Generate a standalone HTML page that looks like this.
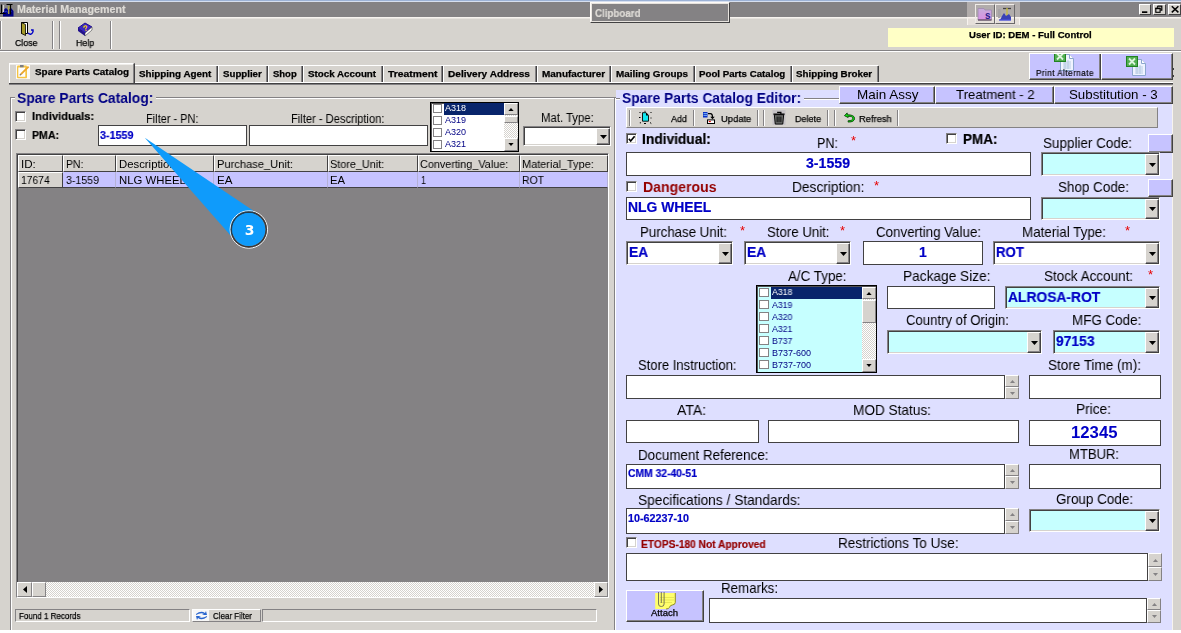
<!DOCTYPE html>
<html><head><meta charset="utf-8"><title>Material Management</title>
<style>
html,body{margin:0;padding:0;}
body{width:1181px;height:633px;overflow:hidden;background:#d6d3ce;position:relative;font-family:"Liberation Sans",sans-serif;}
.a{position:absolute;box-sizing:border-box;}
.t{position:absolute;white-space:pre;transform-origin:0 0;will-change:transform;font-family:"Liberation Sans",sans-serif;}
.sk{border:1px solid;border-color:#848284 #ffffff #ffffff #848284;box-shadow:inset 1px 1px 0 #424142,inset -1px -1px 0 #d6d3ce;}
.fl{border:1px solid #424142;}
.rs{border:1px solid;border-color:#ffffff #424142 #424142 #ffffff;box-shadow:inset -1px -1px 0 #848284;}
.rs2{border:1px solid;border-color:#ffffff #424142 #424142 #ffffff;}
.rs1{border:1px solid;border-color:#ffffff #848284 #848284 #ffffff;}
.btn{display:flex;align-items:center;justify-content:center;}
.ar{display:block;}
.sk>.ar{position:absolute;left:1px;top:1px;overflow:visible;}
.dith{background-color:#fff;background-image:linear-gradient(45deg,#d6d3ce 25%,transparent 25%,transparent 75%,#d6d3ce 75%),linear-gradient(45deg,#d6d3ce 25%,transparent 25%,transparent 75%,#d6d3ce 75%);background-size:2px 2px;background-position:0 0,1px 1px;}
</style></head>
<body>
<div class="a " style="left:0px;top:0px;width:1181px;height:1px;background:#9cb2d6;"></div>
<div class="a " style="left:0px;top:1px;width:1181px;height:1px;background:#d6dfef;"></div>
<div class="a " style="left:0px;top:2px;width:1181px;height:15px;background:#848284;"></div>
<div class="a " style="left:0px;top:17px;width:1181px;height:1px;background:#f7f3ef;"></div>
<div class="a " style="left:0px;top:18px;width:1181px;height:1px;background:#e7e3de;"></div>
<svg class="a" style="left:0;top:3px" width="14" height="14" viewBox="0 0 14 14">
<path d="M3 7l3-2 2 2 3-2 2.500 3v5.500H3z" fill="#000084"/><path d="M5 9l1.500-1 1 1.500M10 9.500l1.500-1" stroke="#2138d6" fill="none"/>
<path d="M1.500 1.500v9.500M0 10.500h5.500" stroke="#000" stroke-width="1.200" fill="none"/><path d="M6.500 1.500h6M10.500 1v10.500" stroke="#000" stroke-width="1.200" fill="none"/>
<path d="M8.700 3v8" stroke="#ada642" stroke-width="1.300"/><path d="M3.500 2v7" stroke="#d6d3ce" stroke-width="1.300"/></svg>
<span class="t" style="transform:scaleX(1.036);left:16.5px;top:4.13px;font-size:10.3px;line-height:12px;color:#dedbd6;font-weight:bold;-webkit-text-stroke:0.2px;">Material Management</span>
<div class="a " style="left:590px;top:2px;width:140px;height:21px;background:#848284;border:1px solid;border-color:#fffbf7 #424142 #424142 #fffbf7;box-shadow:inset 0 0 0 1px #e7e3de;"></div>
<span class="t" style="transform:scaleX(0.938);left:594.5px;top:7.50px;font-size:10.4px;line-height:12px;color:#dedbd6;font-weight:bold;-webkit-text-stroke:0.2px;">Clipboard</span>
<div class="a " style="left:967px;top:2px;width:53px;height:23px;background:rgba(255,244,240,0.37);"></div>
<div class="a " style="left:967px;top:17px;width:1px;height:8px;background:#f7f3ef;"></div>
<div class="a " style="left:1019px;top:17px;width:1px;height:8px;background:#f7f3ef;"></div>
<div class="a " style="left:975px;top:4px;width:20px;height:20px;border:1px solid;border-color:#efebe7 #6b696b #6b696b #efebe7;"></div>
<div class="a " style="left:995px;top:4px;width:20px;height:20px;border:1px solid;border-color:#efebe7 #6b696b #6b696b #efebe7;"></div>
<svg class="a" style="left:977px;top:7px" width="16" height="14" viewBox="0 0 16 14">
<defs><linearGradient id="fg" x1="0" y1="0" x2="0" y2="1"><stop offset="0" stop-color="#c6aedb"/><stop offset="1" stop-color="#d98ee4"/></linearGradient></defs>
<path d="M1 1.500h6l1 1.500h6.500v10H1z" fill="url(#fg)" stroke="#a08ab0" stroke-width="0.8"/><path d="M1 13h13.500" stroke="#5a4a5a" stroke-width="1.200"/>
<text x="8" y="11.500" font-size="10" font-weight="bold" font-family="Liberation Sans, sans-serif" fill="#29208c">s</text></svg>
<svg class="a" style="left:997px;top:7px" width="16" height="14" viewBox="0 0 16 14">
<rect x="1" y="2" width="2.500" height="9" fill="#a5a2a5"/><path d="M6 1.500h8" stroke="#424142" stroke-width="1.300"/><path d="M10 1v12" stroke="#c6ba42" stroke-width="1.400"/>
<path d="M5 9l2-3 2 3 3-2 2 3v3H3z" fill="#3a41b5"/><path d="M2 13h12" stroke="#4a51d6" stroke-width="1.400"/></svg>
<div class="a rs2" style="left:1139px;top:4px;width:12px;height:11px;background:#d6d3ce;"></div>
<div class="a rs2" style="left:1153px;top:4px;width:13px;height:11px;background:#d6d3ce;"></div>
<div class="a rs2" style="left:1168px;top:4px;width:13px;height:11px;background:#d6d3ce;"></div>
<svg class="a" style="left:1139px;top:4px" width="42" height="11" viewBox="1139 4 42 11">
<rect x="1142" y="11.300" width="5.300" height="1.700" fill="#000"/>
<path d="M1157.500 6.200h4.300v4h-1.500M1157.500 6.200v1.500" fill="none" stroke="#000" stroke-width="1.200"/><rect x="1155.800" y="8.300" width="4.300" height="4" fill="none" stroke="#000" stroke-width="1.100"/><path d="M1155.300 8.500h5.300" stroke="#000" stroke-width="1.400"/>
<path d="M1171.800 6.200l6.600 6.200M1178.400 6.200l-6.600 6.200" stroke="#000" stroke-width="1.500"/></svg>
<div class="a " style="left:0px;top:21px;width:1px;height:28px;background:#848284;"></div>
<div class="a " style="left:1px;top:21px;width:1px;height:28px;background:#ffffff;"></div>
<div class="a " style="left:52px;top:21px;width:1px;height:28px;background:#848284;"></div>
<div class="a " style="left:53px;top:21px;width:1px;height:28px;background:#ffffff;"></div>
<div class="a " style="left:59px;top:21px;width:1px;height:28px;background:#848284;"></div>
<div class="a " style="left:60px;top:21px;width:1px;height:28px;background:#ffffff;"></div>
<div class="a " style="left:110px;top:21px;width:1px;height:28px;background:#848284;"></div>
<div class="a " style="left:111px;top:21px;width:1px;height:28px;background:#ffffff;"></div>
<svg class="a" style="left:20px;top:22px" width="14" height="15" viewBox="0 0 14 15">
<path d="M1.5 0.5h6v11h-6z" fill="#fff" stroke="#000"/><path d="M1.5 0.5l4 2v11l-4-2z" fill="#a59a29" stroke="#000" stroke-width="0.8"/>
<path d="M8 11q3 3 5-1" stroke="#0000c6" fill="none" stroke-width="1.4"/><path d="M11 8l2 0 0 2" stroke="#0000c6" fill="none" stroke-width="1.4"/></svg>
<svg class="a" style="left:77px;top:22px" width="16" height="15" viewBox="0 0 16 15">
<path d="M1 6l7-5 7 4-7 6z" fill="#3a28c6" stroke="#21108c"/><path d="M1 6v3l7 5v-3z" fill="#21108c"/><path d="M8 11l7-6v3l-7 6z" fill="#fff" stroke="#424142" stroke-width="0.6"/>
<text x="6" y="9" font-size="8" font-weight="bold" fill="#ffd700" font-family="Liberation Sans" transform="rotate(-15 8 6)">?</text></svg>
<span class="t" style="transform:scaleX(0.898);left:14.6px;top:37.40px;font-size:9.8px;line-height:12px;color:#000;-webkit-text-stroke:0.25px;">Close</span>
<span class="t" style="transform:scaleX(0.903);left:75.8px;top:37.40px;font-size:9.8px;line-height:12px;color:#000;-webkit-text-stroke:0.25px;">Help</span>
<div class="a " style="left:888px;top:28px;width:286px;height:19px;background:#ffffc6;"></div>
<span class="t" style="transform:scaleX(1.028);left:969.4px;top:29.68px;font-size:9.3px;line-height:11px;color:#000;font-weight:bold;-webkit-text-stroke:0.25px;">User ID: DEM - Full Control</span>
<div class="a " style="left:0px;top:50px;width:1181px;height:1px;background:#848284;"></div>
<div class="a " style="left:0px;top:51px;width:1181px;height:1px;background:#ffffff;"></div>
<div class="a " style="left:9px;top:82px;width:1164px;height:1px;background:#ffffff;"></div>
<div class="a " style="left:9px;top:83px;width:1164px;height:2px;background:#424142;"></div>
<div class="a " style="left:9px;top:84px;width:1164px;height:1px;background:#848284;"></div>
<div class="a " style="left:9px;top:63px;width:126px;height:20px;background:#d6d3ce;border-left:1px solid #fff;border-top:1px solid #fff;border-right:2px solid;border-right-color:#424142;box-shadow:inset 0 1px 0 #efedea;"></div>
<div class="a " style="left:133px;top:64px;width:1px;height:19px;background:#848284;"></div>
<svg class="a" style="left:16px;top:65px" width="14" height="14" viewBox="0 0 14 14">
<rect x="0" y="0" width="14" height="14" fill="#fbfaf8"/><rect x="1" y="0.500" width="10" height="12.800" rx="1" fill="#f5c443"/><rect x="2.300" y="2.500" width="7" height="9.300" fill="#fdfdfd"/><rect x="4" y="0" width="3.600" height="2.300" fill="#7b7d84"/>
<path d="M12.600 1.600L5 9.200" stroke="#eda72b" stroke-width="1.900"/><path d="M5.300 8.900L3.800 10.300" stroke="#8c7b63" stroke-width="1.200"/></svg>
<span class="t" style="transform:scaleX(1.031);left:34.7px;top:66.37px;font-size:9.6px;line-height:12px;color:#000;font-weight:bold;-webkit-text-stroke:0.25px;">Spare Parts Catalog</span>
<div class="a " style="left:135px;top:65px;width:743px;height:1px;background:#ffffff;"></div>
<span class="t" style="transform:scaleX(1.072);left:139.2px;top:68.71px;font-size:9.2px;line-height:11px;color:#000;font-weight:bold;-webkit-text-stroke:0.25px;">Shipping Agent</span>
<div class="a " style="left:216px;top:66px;width:1px;height:16px;background:#848284;"></div>
<div class="a " style="left:217px;top:66px;width:1px;height:16px;background:#424142;"></div>
<div class="a " style="left:218px;top:66px;width:1px;height:16px;background:#ffffff;"></div>
<span class="t" style="transform:scaleX(1.055);left:222.8px;top:68.71px;font-size:9.2px;line-height:11px;color:#000;font-weight:bold;-webkit-text-stroke:0.25px;">Supplier</span>
<div class="a " style="left:266px;top:66px;width:1px;height:16px;background:#848284;"></div>
<div class="a " style="left:267px;top:66px;width:1px;height:16px;background:#424142;"></div>
<div class="a " style="left:268px;top:66px;width:1px;height:16px;background:#ffffff;"></div>
<span class="t" style="transform:scaleX(1.032);left:273px;top:68.71px;font-size:9.2px;line-height:11px;color:#000;font-weight:bold;-webkit-text-stroke:0.25px;">Shop</span>
<div class="a " style="left:301px;top:66px;width:1px;height:16px;background:#848284;"></div>
<div class="a " style="left:302px;top:66px;width:1px;height:16px;background:#424142;"></div>
<div class="a " style="left:303px;top:66px;width:1px;height:16px;background:#ffffff;"></div>
<span class="t" style="transform:scaleX(1.064);left:308.3px;top:68.71px;font-size:9.2px;line-height:11px;color:#000;font-weight:bold;-webkit-text-stroke:0.25px;">Stock Account</span>
<div class="a " style="left:381px;top:66px;width:1px;height:16px;background:#848284;"></div>
<div class="a " style="left:382px;top:66px;width:1px;height:16px;background:#424142;"></div>
<div class="a " style="left:383px;top:66px;width:1px;height:16px;background:#ffffff;"></div>
<span class="t" style="transform:scaleX(1.127);left:387.8px;top:68.71px;font-size:9.2px;line-height:11px;color:#000;font-weight:bold;-webkit-text-stroke:0.25px;">Treatment</span>
<div class="a " style="left:441px;top:66px;width:1px;height:16px;background:#848284;"></div>
<div class="a " style="left:442px;top:66px;width:1px;height:16px;background:#424142;"></div>
<div class="a " style="left:443px;top:66px;width:1px;height:16px;background:#ffffff;"></div>
<span class="t" style="transform:scaleX(1.097);left:448px;top:68.71px;font-size:9.2px;line-height:11px;color:#000;font-weight:bold;-webkit-text-stroke:0.25px;">Delivery Address</span>
<div class="a " style="left:535px;top:66px;width:1px;height:16px;background:#848284;"></div>
<div class="a " style="left:536px;top:66px;width:1px;height:16px;background:#424142;"></div>
<div class="a " style="left:537px;top:66px;width:1px;height:16px;background:#ffffff;"></div>
<span class="t" style="transform:scaleX(1.084);left:541.5px;top:68.71px;font-size:9.2px;line-height:11px;color:#000;font-weight:bold;-webkit-text-stroke:0.25px;">Manufacturer</span>
<div class="a " style="left:609px;top:66px;width:1px;height:16px;background:#848284;"></div>
<div class="a " style="left:610px;top:66px;width:1px;height:16px;background:#424142;"></div>
<div class="a " style="left:611px;top:66px;width:1px;height:16px;background:#ffffff;"></div>
<span class="t" style="transform:scaleX(1.077);left:616px;top:68.71px;font-size:9.2px;line-height:11px;color:#000;font-weight:bold;-webkit-text-stroke:0.25px;">Mailing Groups</span>
<div class="a " style="left:693px;top:66px;width:1px;height:16px;background:#848284;"></div>
<div class="a " style="left:694px;top:66px;width:1px;height:16px;background:#424142;"></div>
<div class="a " style="left:695px;top:66px;width:1px;height:16px;background:#ffffff;"></div>
<span class="t" style="transform:scaleX(1.056);left:698.9px;top:68.71px;font-size:9.2px;line-height:11px;color:#000;font-weight:bold;-webkit-text-stroke:0.25px;">Pool Parts Catalog</span>
<div class="a " style="left:790px;top:66px;width:1px;height:16px;background:#848284;"></div>
<div class="a " style="left:791px;top:66px;width:1px;height:16px;background:#424142;"></div>
<div class="a " style="left:792px;top:66px;width:1px;height:16px;background:#ffffff;"></div>
<span class="t" style="transform:scaleX(1.066);left:796.4px;top:68.71px;font-size:9.2px;line-height:11px;color:#000;font-weight:bold;-webkit-text-stroke:0.25px;">Shipping Broker</span>
<div class="a " style="left:877px;top:66px;width:1px;height:16px;background:#848284;"></div>
<div class="a " style="left:878px;top:66px;width:1px;height:16px;background:#424142;"></div>
<div class="a rs" style="left:1029px;top:53px;width:72px;height:27px;background:#c6c3ff;"></div>
<div class="a rs" style="left:1101px;top:53px;width:72px;height:27px;background:#c6c3ff;"></div>
<svg class="a" style="left:1054px;top:51px" width="21" height="20" viewBox="0 0 21 20">
<path d="M6.5 3.5h9l4 4v12h-13z" fill="#eff3ff" stroke="#8ca6ce"/><path d="M15.5 3.5v4h4" fill="#fff" stroke="#8ca6ce"/>
<path d="M9 11h8M9 13h8M9 15h8M9 17h8M11 9v9M14 9v9" stroke="#adc3de" stroke-width="0.8"/>
<rect x="0.5" y="0.5" width="11" height="10" fill="#52ae52" stroke="#218221"/><path d="M3 2.500l6 6M9 2.500l-6 6" stroke="#def3de" stroke-width="1.800"/></svg>
<svg class="a" style="left:1126px;top:56px" width="21" height="20" viewBox="0 0 21 20">
<path d="M6.5 3.5h9l4 4v12h-13z" fill="#eff3ff" stroke="#8ca6ce"/><path d="M15.5 3.5v4h4" fill="#fff" stroke="#8ca6ce"/>
<path d="M9 11h8M9 13h8M9 15h8M9 17h8M11 9v9M14 9v9" stroke="#adc3de" stroke-width="0.8"/>
<rect x="0.5" y="0.5" width="11" height="10" fill="#52ae52" stroke="#218221"/><path d="M3 2.500l6 6M9 2.500l-6 6" stroke="#def3de" stroke-width="1.800"/></svg>
<span class="t" style="transform:scaleX(0.942);left:1035.7px;top:67.62px;font-size:8.6px;line-height:10px;color:#000;letter-spacing:0.5px;-webkit-text-stroke:0.2px;">Print Alternate</span>
<div class="a " style="left:1029px;top:49px;width:72px;height:4px;background:#d6d3ce;"></div>
<div class="a " style="left:1029px;top:51px;width:72px;height:1px;background:#ffffff;"></div>
<div class="a " style="left:1029px;top:50px;width:72px;height:1px;background:#848284;"></div>
<div class="a " style="left:1029px;top:53px;width:72px;height:1px;background:#ffffff;"></div>
<div class="a " style="left:1173px;top:68px;width:1px;height:2px;background:#424142;"></div>
<div class="a " style="left:1173px;top:75px;width:1px;height:2px;background:#424142;"></div>
<div class="a " style="left:10px;top:97px;width:606px;height:534px;border:1px solid #848284;box-shadow:inset 1px 1px 0 #fff,1px 1px 0 #fff;"></div>
<div class="a " style="left:15px;top:92px;width:141px;height:12px;background:#d6d3ce;"></div>
<span class="t" style="transform:scaleX(0.956);left:17px;top:90.08px;font-size:14.5px;line-height:17px;color:#000084;font-weight:bold;">Spare Parts Catalog:</span>
<div class="a sk" style="left:15px;top:111px;width:11px;height:11px;background:#ffffff;"></div>
<div class="a sk" style="left:15px;top:129px;width:11px;height:11px;background:#ffffff;"></div>
<span class="t" style="transform:scaleX(0.949);left:31.9px;top:109.41px;font-size:11.8px;line-height:14px;color:#000;font-weight:bold;-webkit-text-stroke:0.2px;">Individuals:</span>
<span class="t" style="transform:scaleX(0.899);left:31.9px;top:127.81px;font-size:11.8px;line-height:14px;color:#000;font-weight:bold;-webkit-text-stroke:0.2px;">PMA:</span>
<span class="t" style="transform:scaleX(0.916);left:145.8px;top:112.44px;font-size:12px;line-height:14px;color:#000;">Filter - PN:</span>
<span class="t" style="transform:scaleX(0.928);left:291.3px;top:112.44px;font-size:12px;line-height:14px;color:#000;">Filter - Description:</span>
<span class="t" style="transform:scaleX(0.946);left:541px;top:111.44px;font-size:12px;line-height:14px;color:#000;">Mat. Type:</span>
<div class="a fl" style="left:98px;top:125px;width:149px;height:21px;background:#ffffff;"></div>
<span class="t" style="transform:scaleX(0.942);left:99.7px;top:128.15px;font-size:11.4px;line-height:14px;color:#0000c6;font-weight:bold;-webkit-text-stroke:0.2px;">3-1559</span>
<div class="a fl" style="left:249px;top:125px;width:179px;height:21px;background:#ffffff;"></div>
<div class="a " style="left:430px;top:102px;width:89px;height:50px;background:#fff;border:1px solid #000;box-shadow:inset 1px 1px 0 #525152;"></div>
<div class="a " style="left:444px;top:103px;width:60px;height:12px;background:#08246b;"></div>
<div class="a " style="left:433px;top:104px;width:9px;height:9px;background:#fff;border:1px solid #848284;box-sizing:border-box;"></div>
<span class="t" style="left:445.3px;top:103.48px;font-size:9px;line-height:11px;color:#fff;">A318</span>
<div class="a " style="left:433px;top:116px;width:9px;height:9px;background:#fff;border:1px solid #848284;box-sizing:border-box;"></div>
<span class="t" style="left:445.3px;top:115.48px;font-size:9px;line-height:11px;color:#000084;">A319</span>
<div class="a " style="left:433px;top:128px;width:9px;height:9px;background:#fff;border:1px solid #848284;box-sizing:border-box;"></div>
<span class="t" style="left:445.3px;top:127.48px;font-size:9px;line-height:11px;color:#000084;">A320</span>
<div class="a " style="left:433px;top:140px;width:9px;height:9px;background:#fff;border:1px solid #848284;box-sizing:border-box;"></div>
<span class="t" style="left:445.3px;top:139.48px;font-size:9px;line-height:11px;color:#000084;">A321</span>
<div class="a dith" style="left:504px;top:103px;width:14px;height:48px;"></div>
<div class="a rs1 btn" style="left:504px;top:103px;width:14px;height:12px;background:#d6d3ce;"><svg class="ar" width="6" height="3" viewBox="0 0 7 4"><path d="M0 4h7L3.5 0z" fill="#000"/></svg></div>
<div class="a rs1" style="left:504px;top:116px;width:14px;height:7px;background:#d6d3ce;"></div>
<div class="a rs1 btn" style="left:504px;top:138px;width:14px;height:13px;background:#d6d3ce;"><svg class="ar" width="6" height="3" viewBox="0 0 7 4"><path d="M0 0h7L3.5 4z" fill="#000"/></svg></div>
<div class="a sk" style="left:523px;top:126px;width:88px;height:20px;background:#ffffff;"></div>
<div class="a rs btn" style="left:596px;top:128px;width:14px;height:17px;background:#d6d3ce;"><svg class="ar" width="7" height="4" viewBox="0 0 7 4"><path d="M0 0h7L3.5 4z" fill="#000"/></svg></div>
<div class="a " style="left:16px;top:153px;width:593px;height:445px;background:#848284;border:1px solid;border-color:#848284 #fff #fff #848284;box-shadow:inset 1px 1px 0 #424142;"></div>
<div class="a " style="left:18px;top:155px;width:45px;height:17px;background:#d6d3ce;border-top:1px solid #fff;border-left:1px solid #fff;border-right:1px solid #424142;border-bottom:1px solid #424142;"></div>
<div class="a " style="left:18px;top:172px;width:45px;height:16px;background:#d6d3ce;border-top:1px solid #fff;border-left:1px solid #fff;border-right:1px solid #424142;border-bottom:1px solid #424142;"></div>
<span class="t" style="transform:scaleX(1.025);left:20.7px;top:156.98px;font-size:11.3px;line-height:14px;color:#000;">ID:</span>
<span class="t" style="transform:scaleX(0.913);left:21.3px;top:172.98px;font-size:11.3px;line-height:14px;color:#000;">17674</span>
<div class="a " style="left:63px;top:155px;width:53px;height:17px;background:#d6d3ce;border-top:1px solid #fff;border-left:1px solid #fff;border-right:1px solid #424142;border-bottom:1px solid #424142;"></div>
<div class="a " style="left:63px;top:172px;width:53px;height:16px;background:#c6c3ff;border-right:1px solid #b5b2d6;border-bottom:1px solid #424142;"></div>
<span class="t" style="transform:scaleX(0.923);left:65.8px;top:156.98px;font-size:11.3px;line-height:14px;color:#000;">PN:</span>
<span class="t" style="transform:scaleX(0.938);left:65.8px;top:172.98px;font-size:11.3px;line-height:14px;color:#000;">3-1559</span>
<div class="a " style="left:116px;top:155px;width:98px;height:17px;background:#d6d3ce;border-top:1px solid #fff;border-left:1px solid #fff;border-right:1px solid #424142;border-bottom:1px solid #424142;"></div>
<div class="a " style="left:116px;top:172px;width:98px;height:16px;background:#c6c3ff;border-right:1px solid #b5b2d6;border-bottom:1px solid #424142;"></div>
<span class="t" style="transform:scaleX(1.004);left:119.1px;top:156.98px;font-size:11.3px;line-height:14px;color:#000;">Description:</span>
<span class="t" style="transform:scaleX(1.005);left:119.1px;top:172.98px;font-size:11.3px;line-height:14px;color:#000;">NLG WHEEL</span>
<div class="a " style="left:214px;top:155px;width:114px;height:17px;background:#d6d3ce;border-top:1px solid #fff;border-left:1px solid #fff;border-right:1px solid #424142;border-bottom:1px solid #424142;"></div>
<div class="a " style="left:214px;top:172px;width:114px;height:16px;background:#c6c3ff;border-right:1px solid #b5b2d6;border-bottom:1px solid #424142;"></div>
<span class="t" style="transform:scaleX(0.984);left:216.5px;top:156.98px;font-size:11.3px;line-height:14px;color:#000;">Purchase_Unit:</span>
<span class="t" style="transform:scaleX(1.028);left:216.5px;top:172.98px;font-size:11.3px;line-height:14px;color:#000;">EA</span>
<div class="a " style="left:328px;top:155px;width:90px;height:17px;background:#d6d3ce;border-top:1px solid #fff;border-left:1px solid #fff;border-right:1px solid #424142;border-bottom:1px solid #424142;"></div>
<div class="a " style="left:328px;top:172px;width:90px;height:16px;background:#c6c3ff;border-right:1px solid #b5b2d6;border-bottom:1px solid #424142;"></div>
<span class="t" style="transform:scaleX(0.959);left:330px;top:156.98px;font-size:11.3px;line-height:14px;color:#000;">Store_Unit:</span>
<span class="t" style="transform:scaleX(0.995);left:330px;top:172.98px;font-size:11.3px;line-height:14px;color:#000;">EA</span>
<div class="a " style="left:418px;top:155px;width:102px;height:17px;background:#d6d3ce;border-top:1px solid #fff;border-left:1px solid #fff;border-right:1px solid #424142;border-bottom:1px solid #424142;"></div>
<div class="a " style="left:418px;top:172px;width:102px;height:16px;background:#c6c3ff;border-right:1px solid #b5b2d6;border-bottom:1px solid #424142;"></div>
<span class="t" style="transform:scaleX(0.958);left:420.4px;top:156.98px;font-size:11.3px;line-height:14px;color:#000;">Converting_Value:</span>
<span class="t" style="transform:scaleX(0.800);left:420.8px;top:172.98px;font-size:11.3px;line-height:14px;color:#000;">1</span>
<div class="a " style="left:520px;top:155px;width:88px;height:17px;background:#d6d3ce;border-top:1px solid #fff;border-left:1px solid #fff;border-right:1px solid #424142;border-bottom:1px solid #424142;"></div>
<div class="a " style="left:520px;top:172px;width:88px;height:16px;background:#c6c3ff;border-right:1px solid #b5b2d6;border-bottom:1px solid #424142;"></div>
<span class="t" style="transform:scaleX(0.968);left:522px;top:156.98px;font-size:11.3px;line-height:14px;color:#000;">Material_Type:</span>
<span class="t" style="transform:scaleX(0.922);left:522px;top:172.98px;font-size:11.3px;line-height:14px;color:#000;">ROT</span>
<div class="a dith" style="left:17px;top:582px;width:591px;height:15px;"></div>
<div class="a rs1 btn" style="left:17px;top:582px;width:15px;height:15px;background:#d6d3ce;"><svg class="ar" width="4" height="7" viewBox="0 0 4 7"><path d="M4 0v7L0 3.5z" fill="#000"/></svg></div>
<div class="a rs1" style="left:32px;top:582px;width:14px;height:15px;background:#d6d3ce;"></div>
<div class="a rs1 btn" style="left:594px;top:582px;width:14px;height:15px;background:#d6d3ce;"><svg class="ar" width="4" height="7" viewBox="0 0 4 7"><path d="M0 0v7L4 3.5z" fill="#000"/></svg></div>
<div class="a " style="left:15px;top:609px;width:175px;height:13px;border:1px solid;border-color:#848284 #fff #fff #848284;"></div>
<span class="t" style="transform:scaleX(0.891);left:19.3px;top:610.78px;font-size:9px;line-height:11px;color:#000;-webkit-text-stroke:0.25px;">Found 1 Records</span>
<div class="a rs1" style="left:192px;top:609px;width:69px;height:13px;background:#d6d3ce;"></div>
<div class="a " style="left:193px;top:610px;width:16px;height:11px;background:#f7f7f7;"></div>
<span class="t" style="transform:scaleX(0.886);left:213px;top:610.78px;font-size:9px;line-height:11px;color:#000;-webkit-text-stroke:0.25px;">Clear Filter</span>
<svg class="a" style="left:195px;top:610px" width="13" height="11" viewBox="0 0 13 11"><path d="M1 4q5-4 9-1l1-2 1 4h-5l2-1q-3-2-8 1z" fill="#2965ce"/><path d="M12 7q-5 4-9 1l-1 2-1-4h5l-2 1q3 2 8-1z" fill="#2965ce"/></svg>
<div class="a " style="left:262px;top:609px;width:335px;height:13px;border:1px solid;border-color:#848284 #fff #fff #848284;"></div>
<svg class="a" style="left:130px;top:125px" width="150" height="130" viewBox="130 125 150 130">
<path d="M144.800 137.700 L256 212.500 L231 236 Z" fill="#0f9bfb"/>
<circle cx="248.800" cy="229.500" r="18.700" fill="none" stroke="#f7f7f7" stroke-width="1"/>
<circle cx="248.800" cy="229.500" r="17.400" fill="none" stroke="#2b2b2b" stroke-width="1.600" stroke-opacity="0.85"/>
<circle cx="248.800" cy="229.500" r="16.500" fill="#0f9bfb"/>
<text x="249.600" y="234.800" text-anchor="middle" font-size="14" font-weight="bold" fill="#fff" font-family="DejaVu Sans, sans-serif">3</text></svg>
<div class="a " style="left:614px;top:98px;width:1px;height:533px;background:#848284;"></div>
<div class="a " style="left:615px;top:98px;width:1px;height:533px;background:#fff;"></div>
<div class="a " style="left:616px;top:90px;width:556px;height:540px;background:#dedfff;"></div>
<div class="a " style="left:616px;top:630px;width:556px;height:1px;background:#fff;"></div>
<div class="a " style="left:1172px;top:86px;width:1px;height:545px;background:#f7f3ef;"></div>
<div class="a " style="left:616px;top:98px;width:223px;height:1px;background:#848284;"></div>
<div class="a " style="left:616px;top:99px;width:223px;height:1px;background:#fff;"></div>
<div class="a " style="left:620px;top:91px;width:184px;height:14px;background:#dedfff;"></div>
<span class="t" style="transform:scaleX(0.950);left:622px;top:90.08px;font-size:14.5px;line-height:17px;color:#000084;font-weight:bold;">Spare Parts Catalog Editor:</span>
<div class="a rs" style="left:839px;top:86px;width:96px;height:18px;background:#c6c3ff;"></div>
<div class="a rs" style="left:935px;top:86px;width:119px;height:18px;background:#c6c3ff;"></div>
<div class="a rs" style="left:1054px;top:86px;width:119px;height:18px;background:#c6c3ff;"></div>
<span class="t" style="transform:scaleX(1.013);left:856.6px;top:86.99px;font-size:13.3px;line-height:16px;color:#000;">Main Assy</span>
<span class="t" style="transform:scaleX(0.991);left:956px;top:86.99px;font-size:13.3px;line-height:16px;color:#000;">Treatment - 2</span>
<span class="t" style="transform:scaleX(0.995);left:1068.7px;top:86.99px;font-size:13.3px;line-height:16px;color:#000;">Substitution - 3</span>
<div class="a " style="left:626px;top:107px;width:532px;height:21px;background:#d6d3ce;border-top:1px solid #fff;border-left:1px solid #fff;border-bottom:1px solid #848284;border-right:1px solid #848284;"></div>
<div class="a " style="left:629px;top:110px;width:1px;height:16px;background:#848284;"></div>
<div class="a " style="left:630px;top:110px;width:1px;height:16px;background:#fff;"></div>
<div class="a " style="left:693px;top:110px;width:1px;height:16px;background:#848284;"></div>
<div class="a " style="left:694px;top:110px;width:1px;height:16px;background:#fff;"></div>
<div class="a " style="left:757px;top:110px;width:1px;height:16px;background:#848284;"></div>
<div class="a " style="left:758px;top:110px;width:1px;height:16px;background:#fff;"></div>
<div class="a " style="left:763px;top:110px;width:1px;height:16px;background:#848284;"></div>
<div class="a " style="left:764px;top:110px;width:1px;height:16px;background:#fff;"></div>
<div class="a " style="left:827px;top:110px;width:1px;height:16px;background:#848284;"></div>
<div class="a " style="left:828px;top:110px;width:1px;height:16px;background:#fff;"></div>
<div class="a " style="left:834px;top:110px;width:1px;height:16px;background:#848284;"></div>
<div class="a " style="left:835px;top:110px;width:1px;height:16px;background:#fff;"></div>
<div class="a " style="left:897px;top:110px;width:1px;height:16px;background:#848284;"></div>
<div class="a " style="left:898px;top:110px;width:1px;height:16px;background:#fff;"></div>
<span class="t" style="transform:scaleX(0.946);left:671px;top:112.61px;font-size:9.5px;line-height:11px;color:#000;-webkit-text-stroke:0.25px;">Add</span>
<span class="t" style="transform:scaleX(0.986);left:720.8px;top:112.61px;font-size:9.5px;line-height:11px;color:#000;-webkit-text-stroke:0.25px;">Update</span>
<span class="t" style="transform:scaleX(0.947);left:794.7px;top:112.61px;font-size:9.5px;line-height:11px;color:#000;-webkit-text-stroke:0.25px;">Delete</span>
<span class="t" style="transform:scaleX(0.980);left:859px;top:112.61px;font-size:9.5px;line-height:11px;color:#000;-webkit-text-stroke:0.25px;">Refresh</span>
<svg class="a" style="left:638px;top:110px" width="15" height="15" viewBox="638 110 15 15">
<path d="M642.500 112.700h3.500l2.500 2.700v5.800h-6z" fill="#10e7ef" stroke="#000" stroke-width="0.900"/><path d="M646 112.500l2.700 3h-2.700z" fill="#000"/>
<path d="M639.500 112.500h1M650.500 112.500h1M639 117.500h1.500M650.500 118h1M639.800 122.800h1.200M650 122.500l1.300 1M645 110.800v1M644 123.500h2" stroke="#000" stroke-width="1"/></svg>
<svg class="a" style="left:702px;top:111px" width="14" height="14" viewBox="702 111 14 14">
<rect x="703" y="112" width="4.500" height="5.500" fill="#0830c6"/><path d="M703.500 113.600h3.500M703.500 115.400h3.500" stroke="#9cd3ff" stroke-width="0.800"/>
<path d="M708 113.700h2.500q2 0 2 3.500" stroke="#000" fill="none" stroke-width="1.200"/><path d="M710.300 116.800h4.400l-2.200 2.400z" fill="#000"/>
<rect x="707.500" y="119.900" width="7" height="3.600" fill="#fff" stroke="#000" stroke-width="1"/><path d="M708.800 121.500h2" stroke="#e70000" stroke-width="1.200"/></svg>
<svg class="a" style="left:772px;top:110px" width="14" height="15" viewBox="0 0 14 16"><rect x="0" y="0" width="14" height="16" fill="#c6c3c6"/>
<path d="M2 5h10l-1 10H3z" fill="#6b6d6b" stroke="#000"/><path d="M1 4.500h12M5 2.500h4v2" stroke="#000" fill="none" stroke-width="1.3"/><path d="M5 7v6M7 7v6M9 7v6" stroke="#000"/></svg>
<svg class="a" style="left:843px;top:112px" width="13" height="11" viewBox="0 0 13 12">
<path d="M4 1L1 4l4 2V4.800q5-.5 5 2.200 0 2.500-5 2.500v1.500q7 0 7-4 0-4-8-4z" fill="#10e710" stroke="#003800" stroke-width="0.9"/></svg>
<div class="a sk" style="left:626px;top:133px;width:11px;height:11px;background:#ffffff;"><svg class="ar" width="7" height="7" viewBox="0 0 7 7"><path d="M0.800 3.800L2.700 6L6.600 1.300" stroke="#000" stroke-width="1.600" fill="none"/></svg></div>
<span class="t" style="transform:scaleX(0.983);left:642.2px;top:131.15px;font-size:14px;line-height:17px;color:#000;font-weight:bold;-webkit-text-stroke:0.2px;">Individual:</span>
<span class="t" style="transform:scaleX(0.881);left:817px;top:134.65px;font-size:14.3px;line-height:17px;color:#000;">PN:</span>
<span class="t" style="left:851px;top:133.30px;font-size:13px;line-height:16px;color:#e70000;">*</span>
<div class="a sk" style="left:946px;top:133px;width:11px;height:11px;background:#ffffff;"></div>
<span class="t" style="transform:scaleX(0.964);left:962.5px;top:131.15px;font-size:14px;line-height:17px;color:#000;font-weight:bold;-webkit-text-stroke:0.2px;">PMA:</span>
<span class="t" style="transform:scaleX(0.941);left:1043px;top:134.65px;font-size:14.3px;line-height:17px;color:#000;">Supplier Code:</span>
<div class="a rs" style="left:1148px;top:134px;width:25px;height:19px;background:#c6c3ff;"></div>
<div class="a fl" style="left:626px;top:152px;width:405px;height:24px;background:#ffffff;"></div>
<span class="t" style="transform:scaleX(1.009);left:806px;top:154.55px;font-size:14px;line-height:17px;color:#0000c6;font-weight:bold;-webkit-text-stroke:0.2px;">3-1559</span>
<div class="a sk" style="left:1041px;top:152px;width:119px;height:24px;background:#c6ffff;"></div>
<div class="a rs btn" style="left:1145px;top:154px;width:14px;height:21px;background:#d6d3ce;"><svg class="ar" width="7" height="4" viewBox="0 0 7 4"><path d="M0 0h7L3.5 4z" fill="#000"/></svg></div>
<div class="a sk" style="left:626px;top:181px;width:11px;height:11px;background:#ffffff;"></div>
<span class="t" style="transform:scaleX(0.984);left:642.9px;top:178.65px;font-size:14.3px;line-height:17px;color:#940000;font-weight:bold;">Dangerous</span>
<span class="t" style="transform:scaleX(0.960);left:791.5px;top:179.15px;font-size:14.3px;line-height:17px;color:#000;">Description:</span>
<span class="t" style="left:874px;top:178.30px;font-size:13px;line-height:16px;color:#e70000;">*</span>
<span class="t" style="transform:scaleX(0.940);left:1058px;top:179.15px;font-size:14.3px;line-height:17px;color:#000;">Shop Code:</span>
<div class="a rs" style="left:1148px;top:179px;width:25px;height:18px;background:#c6c3ff;"></div>
<div class="a fl" style="left:626px;top:197px;width:405px;height:23px;background:#ffffff;"></div>
<span class="t" style="left:628.2px;top:198.98px;font-size:13.9px;line-height:17px;color:#0000c6;font-weight:bold;-webkit-text-stroke:0.2px;">NLG WHEEL</span>
<div class="a sk" style="left:1041px;top:197px;width:119px;height:23px;background:#c6ffff;"></div>
<div class="a rs btn" style="left:1145px;top:199px;width:14px;height:20px;background:#d6d3ce;"><svg class="ar" width="7" height="4" viewBox="0 0 7 4"><path d="M0 0h7L3.5 4z" fill="#000"/></svg></div>
<span class="t" style="transform:scaleX(0.928);left:640px;top:223.65px;font-size:14.3px;line-height:17px;color:#000;">Purchase Unit:</span>
<span class="t" style="left:740px;top:223.30px;font-size:13px;line-height:16px;color:#e70000;">*</span>
<span class="t" style="transform:scaleX(0.925);left:766.5px;top:223.65px;font-size:14.3px;line-height:17px;color:#000;">Store Unit:</span>
<span class="t" style="left:840px;top:223.30px;font-size:13px;line-height:16px;color:#e70000;">*</span>
<span class="t" style="transform:scaleX(0.933);left:876px;top:223.65px;font-size:14.3px;line-height:17px;color:#000;">Converting Value:</span>
<span class="t" style="transform:scaleX(0.938);left:1022px;top:223.65px;font-size:14.3px;line-height:17px;color:#000;">Material Type:</span>
<span class="t" style="left:1125px;top:223.30px;font-size:13px;line-height:16px;color:#e70000;">*</span>
<div class="a sk" style="left:626px;top:241px;width:107px;height:24px;background:#ffffff;"></div>
<div class="a rs btn" style="left:718px;top:243px;width:14px;height:21px;background:#d6d3ce;"><svg class="ar" width="7" height="4" viewBox="0 0 7 4"><path d="M0 0h7L3.5 4z" fill="#000"/></svg></div>
<span class="t" style="transform:scaleX(0.987);left:628.8px;top:243.75px;font-size:14px;line-height:17px;color:#0000c6;font-weight:bold;-webkit-text-stroke:0.2px;">EA</span>
<div class="a sk" style="left:744px;top:241px;width:107px;height:24px;background:#ffffff;"></div>
<div class="a rs btn" style="left:836px;top:243px;width:14px;height:21px;background:#d6d3ce;"><svg class="ar" width="7" height="4" viewBox="0 0 7 4"><path d="M0 0h7L3.5 4z" fill="#000"/></svg></div>
<span class="t" style="transform:scaleX(0.987);left:746.8px;top:243.75px;font-size:14px;line-height:17px;color:#0000c6;font-weight:bold;-webkit-text-stroke:0.2px;">EA</span>
<div class="a fl" style="left:863px;top:241px;width:120px;height:24px;background:#ffffff;"></div>
<span class="t" style="left:919.3px;top:243.55px;font-size:14px;line-height:17px;color:#0000c6;font-weight:bold;-webkit-text-stroke:0.2px;">1</span>
<div class="a sk" style="left:993px;top:241px;width:167px;height:24px;background:#ffffff;"></div>
<div class="a rs btn" style="left:1145px;top:243px;width:14px;height:21px;background:#d6d3ce;"><svg class="ar" width="7" height="4" viewBox="0 0 7 4"><path d="M0 0h7L3.5 4z" fill="#000"/></svg></div>
<span class="t" style="transform:scaleX(0.945);left:995.8px;top:243.75px;font-size:14px;line-height:17px;color:#0000c6;font-weight:bold;-webkit-text-stroke:0.2px;">ROT</span>
<span class="t" style="transform:scaleX(0.936);left:787.5px;top:268.15px;font-size:14.3px;line-height:17px;color:#000;">A/C Type:</span>
<span class="t" style="transform:scaleX(0.957);left:902.5px;top:268.15px;font-size:14.3px;line-height:17px;color:#000;">Package Size:</span>
<span class="t" style="transform:scaleX(0.941);left:1044px;top:268.15px;font-size:14.3px;line-height:17px;color:#000;">Stock Account:</span>
<span class="t" style="left:1148px;top:267.30px;font-size:13px;line-height:16px;color:#e70000;">*</span>
<div class="a fl" style="left:887px;top:286px;width:108px;height:23px;background:#ffffff;"></div>
<div class="a sk" style="left:1005px;top:286px;width:155px;height:23px;background:#c6ffff;"></div>
<div class="a rs btn" style="left:1145px;top:288px;width:14px;height:20px;background:#d6d3ce;"><svg class="ar" width="7" height="4" viewBox="0 0 7 4"><path d="M0 0h7L3.5 4z" fill="#000"/></svg></div>
<span class="t" style="transform:scaleX(0.988);left:1007.8px;top:288.75px;font-size:14px;line-height:17px;color:#0000c6;font-weight:bold;-webkit-text-stroke:0.2px;">ALROSA-ROT</span>
<div class="a " style="left:756px;top:285px;width:121px;height:88px;background:#c6ffff;border:1px solid #000;box-shadow:inset 1px 1px 0 #525152;"></div>
<div class="a " style="left:770.5px;top:287px;width:91.5px;height:11.8px;background:#08246b;"></div>
<div class="a " style="left:759.3px;top:287.5px;width:9.5px;height:9.2px;background:#fff;border:1px solid #848284;"></div>
<span class="t" style="transform:scaleX(0.970);left:771.7px;top:287.48px;font-size:9px;line-height:11px;color:#fff;">A318</span>
<div class="a " style="left:759.3px;top:299.6px;width:9.5px;height:9.2px;background:#fff;border:1px solid #848284;"></div>
<span class="t" style="transform:scaleX(0.970);left:771.7px;top:299.61px;font-size:9px;line-height:11px;color:#000084;">A319</span>
<div class="a " style="left:759.3px;top:311.8px;width:9.5px;height:9.2px;background:#fff;border:1px solid #848284;"></div>
<span class="t" style="transform:scaleX(0.970);left:771.7px;top:311.74px;font-size:9px;line-height:11px;color:#000084;">A320</span>
<div class="a " style="left:759.3px;top:323.9px;width:9.5px;height:9.2px;background:#fff;border:1px solid #848284;"></div>
<span class="t" style="transform:scaleX(0.970);left:771.7px;top:323.87px;font-size:9px;line-height:11px;color:#000084;">A321</span>
<div class="a " style="left:759.3px;top:336.0px;width:9.5px;height:9.2px;background:#fff;border:1px solid #848284;"></div>
<span class="t" style="transform:scaleX(0.970);left:771.7px;top:336.00px;font-size:9px;line-height:11px;color:#000084;">B737</span>
<div class="a " style="left:759.3px;top:348.1px;width:9.5px;height:9.2px;background:#fff;border:1px solid #848284;"></div>
<span class="t" style="left:771.7px;top:348.13px;font-size:9px;line-height:11px;color:#000084;">B737-600</span>
<div class="a " style="left:759.3px;top:360.3px;width:9.5px;height:9.2px;background:#fff;border:1px solid #848284;"></div>
<span class="t" style="left:771.7px;top:360.26px;font-size:9px;line-height:11px;color:#000084;">B737-700</span>
<div class="a dith" style="left:862px;top:287px;width:14px;height:85px;"></div>
<div class="a rs1 btn" style="left:862px;top:287px;width:14px;height:12px;background:#d6d3ce;"><svg class="ar" width="6" height="3" viewBox="0 0 7 4"><path d="M0 4h7L3.5 0z" fill="#000"/></svg></div>
<div class="a rs1" style="left:862px;top:300px;width:14px;height:23px;background:#d6d3ce;"></div>
<div class="a rs1 btn" style="left:862px;top:359px;width:14px;height:13px;background:#d6d3ce;"><svg class="ar" width="6" height="3" viewBox="0 0 7 4"><path d="M0 0h7L3.5 4z" fill="#000"/></svg></div>
<span class="t" style="transform:scaleX(0.919);left:906px;top:312.35px;font-size:14.3px;line-height:17px;color:#000;">Country of Origin:</span>
<span class="t" style="transform:scaleX(0.937);left:1072px;top:312.35px;font-size:14.3px;line-height:17px;color:#000;">MFG Code:</span>
<div class="a sk" style="left:887px;top:330px;width:155px;height:24px;background:#c6ffff;"></div>
<div class="a rs btn" style="left:1027px;top:332px;width:14px;height:21px;background:#d6d3ce;"><svg class="ar" width="7" height="4" viewBox="0 0 7 4"><path d="M0 0h7L3.5 4z" fill="#000"/></svg></div>
<div class="a sk" style="left:1053px;top:330px;width:107px;height:24px;background:#c6ffff;"></div>
<div class="a rs btn" style="left:1145px;top:332px;width:14px;height:21px;background:#d6d3ce;"><svg class="ar" width="7" height="4" viewBox="0 0 7 4"><path d="M0 0h7L3.5 4z" fill="#000"/></svg></div>
<span class="t" style="transform:scaleX(0.989);left:1055.8px;top:332.75px;font-size:14px;line-height:17px;color:#0000c6;font-weight:bold;-webkit-text-stroke:0.2px;">97153</span>
<span class="t" style="transform:scaleX(0.911);left:637.5px;top:357.15px;font-size:14.3px;line-height:17px;color:#000;">Store Instruction:</span>
<span class="t" style="transform:scaleX(0.944);left:1048px;top:356.65px;font-size:14.3px;line-height:17px;color:#000;">Store Time (m):</span>
<div class="a fl" style="left:626px;top:375px;width:379px;height:24px;background:#ffffff;"></div>
<div class="a rs1 btn" style="left:1005px;top:375px;width:14px;height:12px;background:#d6d3ce;"><svg class="ar" width="5" height="3" viewBox="0 0 5 3"><path d="M0 3h5L2.5 0z" fill="#848284"/></svg></div>
<div class="a rs1 btn" style="left:1005px;top:387px;width:14px;height:12px;background:#d6d3ce;"><svg class="ar" width="5" height="3" viewBox="0 0 5 3"><path d="M0 0h5L2.5 3z" fill="#848284"/></svg></div>
<div class="a fl" style="left:1029px;top:375px;width:132px;height:24px;background:#ffffff;"></div>
<span class="t" style="transform:scaleX(0.978);left:677px;top:401.65px;font-size:14.3px;line-height:17px;color:#000;">ATA:</span>
<span class="t" style="transform:scaleX(0.953);left:853px;top:401.65px;font-size:14.3px;line-height:17px;color:#000;">MOD Status:</span>
<span class="t" style="transform:scaleX(0.958);left:1076px;top:401.15px;font-size:14.3px;line-height:17px;color:#000;">Price:</span>
<div class="a fl" style="left:626px;top:420px;width:133px;height:23px;background:#ffffff;"></div>
<div class="a fl" style="left:768px;top:420px;width:251px;height:23px;background:#ffffff;"></div>
<div class="a fl" style="left:1029px;top:420px;width:132px;height:26px;background:#ffffff;"></div>
<span class="t" style="transform:scaleX(1.013);left:1071px;top:421.88px;font-size:16.5px;line-height:20px;color:#0000c6;font-weight:bold;">12345</span>
<span class="t" style="transform:scaleX(0.938);left:637.5px;top:447.15px;font-size:14.3px;line-height:17px;color:#000;">Document Reference:</span>
<span class="t" style="transform:scaleX(0.912);left:1069px;top:446.15px;font-size:14.3px;line-height:17px;color:#000;">MTBUR:</span>
<div class="a fl" style="left:626px;top:464px;width:379px;height:25px;background:#ffffff;"></div>
<div class="a rs1 btn" style="left:1005px;top:464px;width:14px;height:12px;background:#d6d3ce;"><svg class="ar" width="5" height="3" viewBox="0 0 5 3"><path d="M0 3h5L2.5 0z" fill="#848284"/></svg></div>
<div class="a rs1 btn" style="left:1005px;top:476px;width:14px;height:13px;background:#d6d3ce;"><svg class="ar" width="5" height="3" viewBox="0 0 5 3"><path d="M0 0h5L2.5 3z" fill="#848284"/></svg></div>
<span class="t" style="transform:scaleX(0.985);left:628px;top:467.46px;font-size:10.5px;line-height:13px;color:#0000c6;font-weight:bold;-webkit-text-stroke:0.2px;">CMM 32-40-51</span>
<div class="a fl" style="left:1029px;top:464px;width:132px;height:25px;background:#ffffff;"></div>
<span class="t" style="transform:scaleX(0.960);left:637.5px;top:491.65px;font-size:14.3px;line-height:17px;color:#000;">Specifications / Standards:</span>
<span class="t" style="transform:scaleX(0.941);left:1056px;top:491.15px;font-size:14.3px;line-height:17px;color:#000;">Group Code:</span>
<div class="a fl" style="left:626px;top:508px;width:379px;height:26px;background:#ffffff;"></div>
<div class="a rs1 btn" style="left:1005px;top:508px;width:14px;height:13px;background:#d6d3ce;"><svg class="ar" width="5" height="3" viewBox="0 0 5 3"><path d="M0 3h5L2.5 0z" fill="#848284"/></svg></div>
<div class="a rs1 btn" style="left:1005px;top:521px;width:14px;height:13px;background:#d6d3ce;"><svg class="ar" width="5" height="3" viewBox="0 0 5 3"><path d="M0 0h5L2.5 3z" fill="#848284"/></svg></div>
<span class="t" style="transform:scaleX(1.024);left:628px;top:511.96px;font-size:10.5px;line-height:13px;color:#0000c6;font-weight:bold;-webkit-text-stroke:0.2px;">10-62237-10</span>
<div class="a sk" style="left:1029px;top:509px;width:131px;height:23px;background:#c6ffff;"></div>
<div class="a rs btn" style="left:1145px;top:511px;width:14px;height:20px;background:#d6d3ce;"><svg class="ar" width="7" height="4" viewBox="0 0 7 4"><path d="M0 0h7L3.5 4z" fill="#000"/></svg></div>
<div class="a sk" style="left:626px;top:537px;width:11px;height:11px;background:#ffffff;"></div>
<span class="t" style="transform:scaleX(0.971);left:641px;top:537.96px;font-size:10.5px;line-height:13px;color:#940000;font-weight:bold;-webkit-text-stroke:0.2px;">ETOPS-180 Not Approved</span>
<span class="t" style="transform:scaleX(0.950);left:837.5px;top:535.15px;font-size:14.3px;line-height:17px;color:#000;">Restrictions To Use:</span>
<div class="a fl" style="left:626px;top:553px;width:522px;height:28px;background:#ffffff;"></div>
<div class="a rs1 btn" style="left:1148px;top:553px;width:14px;height:14px;background:#d6d3ce;"><svg class="ar" width="5" height="3" viewBox="0 0 5 3"><path d="M0 3h5L2.5 0z" fill="#848284"/></svg></div>
<div class="a rs1 btn" style="left:1148px;top:567px;width:14px;height:14px;background:#d6d3ce;"><svg class="ar" width="5" height="3" viewBox="0 0 5 3"><path d="M0 0h5L2.5 3z" fill="#848284"/></svg></div>
<span class="t" style="transform:scaleX(0.932);left:721px;top:580.15px;font-size:14.3px;line-height:17px;color:#000;">Remarks:</span>
<div class="a rs" style="left:626px;top:590px;width:78px;height:32px;background:#c6c3ff;"></div>
<svg class="a" style="left:654px;top:591px" width="24" height="20" viewBox="654 591 24 20">
<path d="M655.200 593h20.300v9.500q-.2 2.300-3 2.500-2.300.3-2.800 2.300-.5 1.700-3.500 1.700H655.200z" fill="#ffff6b"/>
<path d="M675.300 593v9.500q-.2 2.300-3 2.500-2.300.3-2.800 2.300-.5 1.700-3.500 1.700" fill="none" stroke="#8c8a29" stroke-width="1"/>
<path d="M660 597.500h14M660 600h14M660 602.500h12" stroke="#dede4a" stroke-width="0.700"/>
<path d="M658.500 592v12q0 2.500 2.800 2.500t2.800-2.500V592M661.300 592v11" stroke="#6b6b52" fill="none" stroke-width="0.900"/></svg>
<span class="t" style="transform:scaleX(1.086);left:651.3px;top:608.05px;font-size:8.8px;line-height:11px;color:#000;-webkit-text-stroke:0.25px;">Attach</span>
<div class="a fl" style="left:709px;top:598px;width:438px;height:25px;background:#ffffff;"></div>
<div class="a rs1 btn" style="left:1147px;top:598px;width:14px;height:12px;background:#d6d3ce;"><svg class="ar" width="5" height="3" viewBox="0 0 5 3"><path d="M0 3h5L2.5 0z" fill="#848284"/></svg></div>
<div class="a rs1 btn" style="left:1147px;top:610px;width:14px;height:13px;background:#d6d3ce;"><svg class="ar" width="5" height="3" viewBox="0 0 5 3"><path d="M0 0h5L2.5 3z" fill="#848284"/></svg></div>
<div class="a " style="left:0px;top:630px;width:1181px;height:3px;background:#fff;"></div>
</body></html>
